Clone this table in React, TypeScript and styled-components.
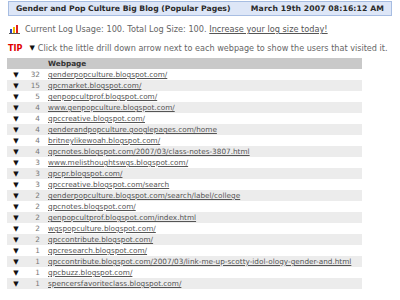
import React from "react";
import styled, { createGlobalStyle } from "styled-components";

const Global = createGlobalStyle`
  html, body { margin: 0; padding: 0; background: #fff; }
  body { font-family: "DejaVu Sans", Verdana, sans-serif; color: #555; }
`;

const Page = styled.div`
  width: 400px;
  height: 300px;
  overflow: hidden;
  padding-top: 1px;
  box-sizing: border-box;
`;

const TitleBar = styled.div`
  margin: 0 8px 0 8px;
  height: 13px;
  border: 1px solid #a7bde2;
  background: #dde6f7;
  display: flex;
  align-items: center;
  justify-content: space-between;
  padding: 0 7px 0 7px;
  font-size: 7.7px;
  font-weight: bold;
  color: #2a2a2a;
  white-space: nowrap;
`;

const Stamp = styled.span`
  letter-spacing: 0.1px;
`;

const InfoLine = styled.div`
  display: flex;
  align-items: center;
  gap: 5px;
  margin: 7px 0 0 9px;
  height: 12px;
  font-size: 8.2px;
  color: #666;
  white-space: nowrap;
`;

const Link = styled.a`
  color: #555;
  text-decoration: underline;
`;

const TipLine = styled.div`
  display: flex;
  align-items: center;
  margin: 7px 0 0 8px;
  height: 12px;
  font-size: 8.1px;
  color: #666;
  white-space: nowrap;
`;

const TipLabel = styled.span`
  color: #e00000;
  font-weight: bold;
  margin-right: 7px;
`;

const Arrow = styled.span`
  color: #111;
  font-size: 7px;
  margin-right: 3px;
`;

const Table = styled.div`
  margin: 4px 0 0 7px;
  width: 355px;
  font-size: 7.3px;
`;

const Row = styled.div<{ $shade: "head" | "odd" | "even" }>`
  display: grid;
  grid-template-columns: 18px 15px 1fr;
  align-items: center;
  height: 11px;
  background: ${(p) =>
    p.$shade === "head" ? "#c9c9c9" : p.$shade === "even" ? "#ececec" : "#fff"};
  white-space: nowrap;
`;

const DrillCell = styled.span`
  text-align: center;
  color: #111;
  font-size: 7px;
`;

const CountCell = styled.span`
  text-align: right;
  color: #777;
`;

const UrlCell = styled.span<{ $head?: boolean }>`
  padding-left: 8px;
  color: ${(p) => (p.$head ? "#333" : "#555")};
  font-weight: ${(p) => (p.$head ? "bold" : "normal")};
  text-decoration: ${(p) => (p.$head ? "none" : "underline")};
`;

const ChartIcon = () => (
  <svg width="11" height="9" viewBox="0 0 11 9">
    <rect x="1" y="4" width="2" height="4" fill="#2b3fbf" />
    <rect x="4" y="2" width="2" height="6" fill="#f0b800" />
    <rect x="7" y="0" width="2" height="8" fill="#e02020" />
    <rect x="0" y="8" width="11" height="1" fill="#555" />
  </svg>
);

const rows: [number, string][] = [
  [32, "genderpopculture.blogspot.com/"],
  [15, "gpcmarket.blogspot.com/"],
  [5, "genpopcultprof.blogspot.com/"],
  [4, "www.genpopculture.blogspot.com/"],
  [4, "gpccreative.blogspot.com/"],
  [4, "genderandpopculture.googlepages.com/home"],
  [4, "britneylikewoah.blogspot.com/"],
  [4, "gpcnotes.blogspot.com/2007/03/class-notes-3807.html"],
  [3, "www.melisthoughtswgs.blogspot.com/"],
  [3, "gpcpr.blogspot.com/"],
  [3, "gpccreative.blogspot.com/search"],
  [2, "genderpopculture.blogspot.com/search/label/college"],
  [2, "gpcnotes.blogspot.com/"],
  [2, "genpopcultprof.blogspot.com/index.html"],
  [2, "wgspopculture.blogspot.com/"],
  [2, "gpccontribute.blogspot.com/"],
  [1, "gpcresearch.blogspot.com/"],
  [1, "gpccontribute.blogspot.com/2007/03/link-me-up-scotty-idol-ology-gender-and.html"],
  [1, "gpcbuzz.blogspot.com/"],
  [1, "spencersfavoriteclass.blogspot.com/"],
];

export default function App() {
  return (
    <>
      <Global />
      <Page>
        <TitleBar>
          <span>Gender and Pop Culture Big Blog (Popular Pages)</span>
          <Stamp>March 19th 2007 08:16:12 AM</Stamp>
        </TitleBar>
        <InfoLine>
          <ChartIcon />
          <span>
            Current Log Usage: 100. Total Log Size: 100.{" "}
            <Link href="#">Increase your log size today!</Link>
          </span>
        </InfoLine>
        <TipLine>
          <TipLabel>TIP</TipLabel>
          <Arrow>▼</Arrow>
          <span>
            Click the little drill down arrow next to each webpage to show the users that visited it.
          </span>
        </TipLine>
        <Table>
          <Row $shade="head">
            <span />
            <span />
            <UrlCell $head>Webpage</UrlCell>
          </Row>
          {rows.map(([n, url], i) => (
            <Row key={i} $shade={i % 2 === 0 ? "odd" : "even"}>
              <DrillCell>▼</DrillCell>
              <CountCell>{n}</CountCell>
              <UrlCell>{url}</UrlCell>
            </Row>
          ))}
        </Table>
      </Page>
    </>
  );
}
